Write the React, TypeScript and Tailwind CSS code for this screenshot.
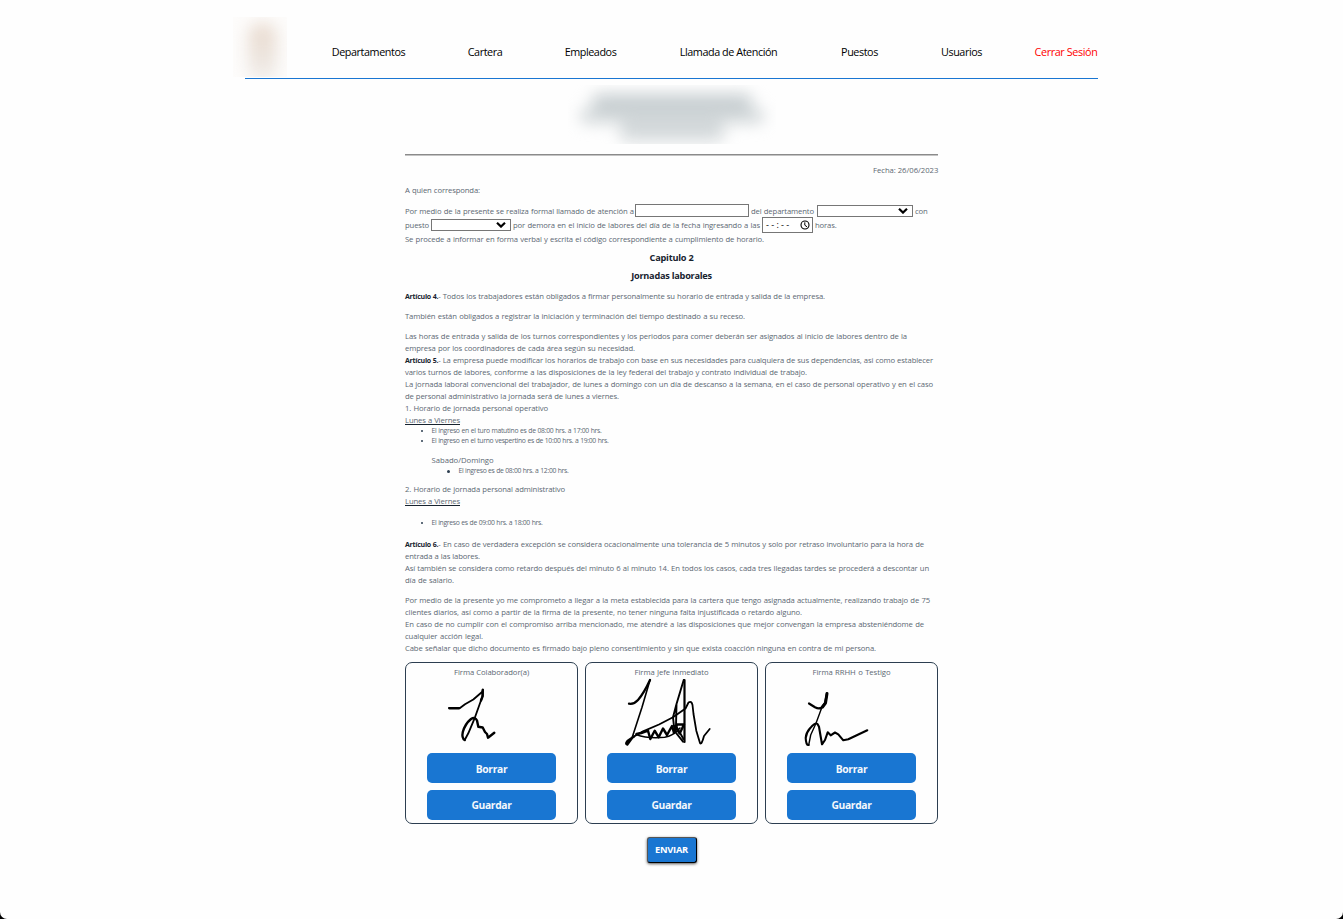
import type { ReactNode } from 'react';

const navItems = [
  { label: 'Departamentos', width: 'w-[73px]' },
  { label: 'Cartera', width: 'w-[34px]' },
  { label: 'Empleados', width: 'w-[51px]' },
  { label: 'Llamada de Atención', width: 'w-[99px]' },
  { label: 'Puestos', width: 'w-[37px]' },
  { label: 'Usuarios', width: 'w-[41px]' },
];

function Line({ w, children, className = '' }: { w: string; children: ReactNode; className?: string }) {
  return (
    <p className={`h-3 whitespace-nowrap leading-3 [text-align-last:justify] ${w} ${className}`}>{children}</p>
  );
}

function Art({ n }: { n: number }) {
  return (
    <>
      <b className="text-[7px] font-bold tracking-[-0.25px] text-[#17222e]">Artículo {n}.</b>-
    </>
  );
}

function Select({ className, label }: { className: string; label: string }) {
  return (
    <div className={`flex h-3 items-center justify-end border border-[#767676] bg-white pr-1 ${className}`} role="combobox" aria-label={label}>
      <svg viewBox="0 0 10 6" className="h-[6px] w-[10px]" fill="none" stroke="#000" strokeWidth="2.2">
        <path d="M1 0.8 5 4.6 9 0.8" />
      </svg>
    </div>
  );
}

function Bullet({ w, children, big = false }: { w: string; children: ReactNode; big?: boolean }) {
  return (
    <div className="flex h-[10px] items-center">
      <span className={`mr-[9px] shrink-0 rounded-full bg-[#2c3e50] ${big ? 'size-[3px]' : 'size-[2px]'}`} />
      <p className={`whitespace-nowrap text-[6.8px] leading-[10px] tracking-[-0.3px] [text-align-last:justify] ${w}`}>{children}</p>
    </div>
  );
}

function SignatureCard({ title, w, children }: { title: string; w: string; children: ReactNode }) {
  return (
    <div className="flex h-[162px] w-[173px] flex-col items-center rounded-[7px] border border-[#2c3e50] pt-[3px]">
      <Line w={w} className="tracking-[-0.05px]">{title}</Line>
      <svg viewBox="0 0 171 72" className="h-[72px] w-[171px] shrink-0" fill="none" stroke="#000" strokeLinecap="round" strokeLinejoin="round">
        {children}
      </svg>
      <button className="mt-[3px] h-[30px] w-[129px] shrink-0 rounded-[5px] bg-[#1976d2] pt-[2px] text-[10.3px] font-bold leading-none tracking-[-0.35px] text-[#f4f8fc]">Borrar</button>
      <button className="mt-[7px] h-[30px] w-[129px] shrink-0 rounded-[5px] bg-[#1976d2] text-[10.3px] font-bold leading-none tracking-[-0.35px] text-[#f4f8fc]">Guardar</button>
    </div>
  );
}

export default function App() {
  return (
    <div className="bg-black font-['Open_Sans',sans-serif]">
      <div className="h-[919px] overflow-hidden rounded-b-[7px] bg-[#fefefe]">
        <header className="mx-auto flex h-[79px] w-[853px] items-start border-b border-[#1976d2]">
          <div className="mt-[17px] -ml-3 h-[60px] w-[54px] shrink-0 overflow-hidden bg-[#fdfcfb]">
            <div className="mt-[6px] ml-[15px] h-[58px] w-[29px] rounded-full bg-linear-to-b from-[#e8d9cd] to-[#f0edea] blur-[8px]" />
          </div>
          <nav className="mt-[43px] ml-[45px] flex gap-[63px] whitespace-nowrap text-[10.8px] leading-[18px] tracking-[-0.43px] text-black">
            {navItems.map((item) => (
              <a key={item.label} className={`flex shrink-0 justify-center ${item.width}`}>{item.label}</a>
            ))}
            <a className="-ml-[11px] flex w-16 shrink-0 justify-center tracking-[-0.38px] text-[#ff0000]">Cerrar Sesión</a>
          </nav>
        </header>

        <main className="mx-auto w-[533px] text-[7.7px] leading-3 tracking-[-0.12px] text-[#5c6873]">
          <div className="mx-auto mt-[6px] flex h-[59px] w-[208px] flex-col items-center overflow-hidden">
            <div className="mt-[9px] flex flex-col items-center blur-[8px]">
              <div className="h-[15px] w-[160px] rounded-[6px] bg-[#c6cdd0]" />
              <div className="h-[14px] w-[184px] rounded-[6px] bg-[#d0d6d8]" />
              <div className="h-[18px] w-[104px] rounded-[6px] bg-[#d4d9db]" />
            </div>
          </div>
          <hr className="mt-[10px] h-[2px] border-t border-b border-t-[#8b8b8b] border-b-[#c4c4c4]" />
          <Line w="w-[65px]" className="mt-2 ml-auto tracking-[-0.03px]">Fecha: 26/06/2023</Line>
          <Line w="w-[75px]" className="mt-2">A quien corresponda:</Line>

          <div className="mt-2 flex h-[14px] items-center">
            <Line w="w-[229px]">Por medio de la presente se realiza formal llamado de atención a</Line>
            <input aria-label="Colaborador" className="-mt-[1px] ml-[1px] h-[13px] w-[114px] border border-[#767676] bg-white" />
            <Line w="w-[63px]" className="ml-[2px]">del departamento</Line>
            <Select label="Departamento" className="ml-[3px] w-24" />
            <Line w="w-[13px]" className="ml-[2px]">con</Line>
          </div>
          <div className="flex h-[14px] items-center">
            <Line w="w-[24px]">puesto</Line>
            <Select label="Puesto" className="ml-[2px] w-20" />
            <Line w="w-[247px]" className="ml-[2px]">por demora en el inicio de labores del día de la fecha ingresando a las</Line>
            <div className="ml-[2px] flex h-4 w-[51px] shrink-0 items-center justify-between border border-[#767676] bg-white pr-[2px] pl-[3px] text-black">
              <span className="text-[9px] leading-3 tracking-[2.3px]">--:--</span>
              <svg viewBox="0 0 10 10" className="-ml-1 size-[10px] shrink-0" fill="none" stroke="#000">
                <circle cx="5" cy="5" r="4" strokeWidth="1.1" />
                <path d="M4.8 2.3V5.2L7 6.8" strokeWidth="1" />
              </svg>
            </div>
            <Line w="w-[21px]" className="ml-[2px]">horas.</Line>
          </div>
          <Line w="w-[359px]" className="mt-[1px]">Se procede a informar en forma verbal y escrita el código correspondiente a cumplimiento de horario.</Line>

          <h2 className="mt-[4px] text-center text-[9.2px] leading-[18px] font-bold tracking-[-0.22px] text-[#17222e]">Capitulo 2</h2>
          <h2 className="text-center text-[9.2px] leading-[18px] font-bold tracking-[-0.25px] text-[#17222e]">Jornadas laborales</h2>

          <Line w="w-[420px]" className="mt-[5px]"><Art n={4} /> Todos los trabajadores están obligados a firmar personalmente su horario de entrada y salida de la empresa.</Line>
          <Line w="w-[340px]" className="mt-2">También están obligados a registrar la iniciación y terminación del tiempo destinado a su receso.</Line>
          <Line w="w-[502px]" className="mt-2">Las horas de entrada y salida de los turnos correspondientes y los periodos para comer deberán ser asignados al inicio de labores dentro de la</Line>
          <Line w="w-[230px]">empresa por los coordinadores de cada área según su necesidad.</Line>
          <Line w="w-[528px]"><Art n={5} /> La empresa puede modificar los horarios de trabajo con base en sus necesidades para cualquiera de sus dependencias, asi como establecer</Line>
          <Line w="w-[402px]">varios turnos de labores, conforme a las disposiciones de la ley federal del trabajo y contrato individual de trabajo.</Line>
          <Line w="w-[528px]">La jornada laboral convencional del trabajador, de lunes a domingo con un día de descanso a la semana, en el caso de personal operativo y en el caso</Line>
          <Line w="w-[214px]">de personal administrativo la jornada será de lunes a viernes.</Line>
          <Line w="w-[143px]">1. Horario de jornada personal operativo</Line>
          <Line w="w-[55px]" className="underline decoration-[#17222e] decoration-1 underline-offset-1">Lunes a Viernes</Line>
          <div className="pl-[15.5px]">
            <Bullet w="w-[170px]">El ingreso en el turo matutino es de 08:00 hrs. a 17:00 hrs.</Bullet>
            <Bullet w="w-[177px]">El ingreso en el turno vespertino es de 10:00 hrs. a 19:00 hrs.</Bullet>
          </div>
          <Line w="w-[63px]" className="mt-[8px] ml-[26.5px] tracking-[-0.02px]">Sabado/Domingo</Line>
          <div className="pl-[41.5px]">
            <Bullet big w="w-[110px]">El ingreso es de 08:00 hrs. a 12:00 hrs.</Bullet>
          </div>
          <Line w="w-[160px]" className="mt-[7px]">2. Horario de jornada personal administrativo</Line>
          <Line w="w-[55px]" className="underline decoration-[#17222e] decoration-1 underline-offset-1">Lunes a Viernes</Line>
          <div className="mt-[11px] pl-[15.5px]">
            <Bullet w="w-[111px]">El ingreso es de 09:00 hrs. a 18:00 hrs.</Bullet>
          </div>

          <Line w="w-[519px]" className="mt-[10px]"><Art n={6} /> En caso de verdadera excepción se considera ocacionalmente una tolerancia de 5 minutos y solo por retraso involuntario para la hora de</Line>
          <Line w="w-[75px]">entrada a las labores.</Line>
          <Line w="w-[524px]">Así también se considera como retardo después del minuto 6 al minuto 14. En todos los casos, cada tres llegadas tardes se procederá a descontar un</Line>
          <Line w="w-[49px]">día de salario.</Line>
          <Line w="w-[525px]" className="mt-2">Por medio de la presente yo me comprometo a llegar a la meta establecida para la cartera que tengo asignada actualmente, realizando trabajo de 75</Line>
          <Line w="w-[397px]">clientes diarios, así como a partir de la firma de la presente, no tener ninguna falta injustificada o retardo alguno.</Line>
          <Line w="w-[519px]">En caso de no cumplir con el compromiso arriba mencionado, me atendré a las disposiciones que mejor convengan la empresa absteniéndome de</Line>
          <Line w="w-[78px]">cualquier acción legal.</Line>
          <Line w="w-[471px]">Cabe señalar que dicho documento es firmado bajo pleno consentimiento y sin que exista coacción ninguna en contra de mi persona.</Line>

          <section className="mt-2 flex justify-between">
            <SignatureCard title="Firma Colaborador(a)" w="w-[75px]">
              <path d="M43 30H54L59 26.3L67.3 21.5L76.3 13.7L77 11.5L76.3 18.7L69 39.3L62.3 55.3L58.7 62" strokeWidth="1.8" />
              <path d="M43.5 30.3H53M76.7 12V18L75 22.5M58.7 62Q55.5 60 56.8 54Q59 46 65 41Q69 38.500 71 42.500L72.300 48.700L76.700 49.500L79 54L81 56L82 59.700L88.300 54.700" strokeWidth="2.4" />
            </SignatureCard>
            <SignatureCard title="Firma Jefe Inmediato" w="w-[74px]">
              <path d="M43 25.700Q48 26.500 52 22Q58 15 64 2" strokeWidth="2.3" />
              <path d="M64 2L56 29.300L46 60" strokeWidth="1.6" />
              <path d="M46 60L41.300 66.500Q39 66 41.500 63L48 58.500" strokeWidth="2.4" />
              <path d="M48 58.500L57 53.300L73 46.500L87 39.300L99.500 30.500L102.500 24.500Q105.500 22.500 106.500 27L107.500 36L110.300 52.700L114 65Q115.500 67.500 118 58L123.700 51" strokeWidth="1.8" />
              <path d="M98.500 2V64" strokeWidth="2.2" />
              <path d="M97.700 2L90.500 26L87 39.300L88.500 53L97 63.700M90.500 26L90 48L97.500 61" strokeWidth="1.9" />
              <path d="M50.500 56L55.300 55L62 52.700L64.300 61L68.700 52.700L72.700 59.300L77 50.500L81 57L86 48L88 55L91 46.500H98L93.700 55.500L89 48" strokeWidth="2.4" />
              <path d="M50 56.500Q62 61 78.700 59.300Q87 58 94 50" strokeWidth="1.500" />
            </SignatureCard>
            <SignatureCard title="Firma RRHH o Testigo" w="w-[78px]">
              <path d="M43 25.500L49 29.300Q53 31.500 55.700 29.500L59 25.300L61 15.500" strokeWidth="2.2" />
              <path d="M61 15.500L59.500 25L56.500 29" strokeWidth="3" />
              <path d="M56 29L50 45.300L44.700 57L42.700 67" strokeWidth="1.4" />
              <path d="M42.700 67Q40 67.500 39.700 60Q40 55 44 50.300Q49 44 51.500 46L53 48.700L54.700 58.700L56 66.300L59 62L61.700 54.300L64.700 57.300L69 54.500L72.300 56.300L77.300 62.300L82.300 61.300L101.300 52.300" strokeWidth="2.1" />
            </SignatureCard>
          </section>
          <button className="mx-auto mt-[13px] block h-[26px] w-[50px] rounded-[3px] border border-t-[#555] border-r-black border-b-black border-l-[#555] bg-[#1976d2] text-[9.3px] leading-none font-bold tracking-[-0.25px] text-white shadow-[0px_1px_3px_#555]">ENVIAR</button>
        </main>
      </div>
    </div>
  );
}
